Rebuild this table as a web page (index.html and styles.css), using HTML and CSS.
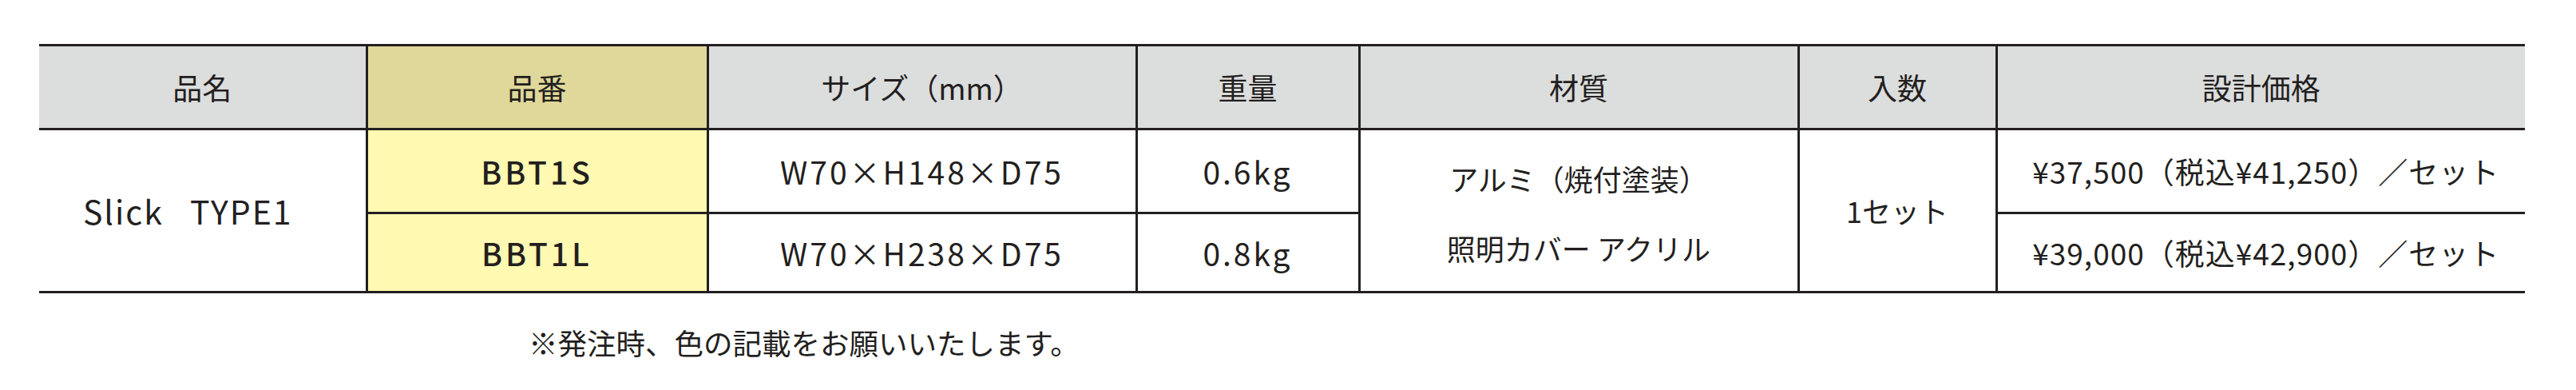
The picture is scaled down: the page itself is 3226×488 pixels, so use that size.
FILE: index.html
```html
<!DOCTYPE html>
<html lang="ja">
<head>
<meta charset="utf-8">
<title>Slick TYPE1 仕様</title>
<link rel="stylesheet" href="styles.css">
</head>
<body>
<div class="page">
  <table class="spec">
    <colgroup>
      <col class="c-name">
      <col class="c-code">
      <col class="c-size">
      <col class="c-weight">
      <col class="c-mat">
      <col class="c-qty">
      <col class="c-price">
    </colgroup>
    <thead>
      <tr>
        <th>品名</th>
        <th class="code-head">品番</th>
        <th>サイズ（mm）</th>
        <th>重量</th>
        <th>材質</th>
        <th>入数</th>
        <th>設計価格</th>
      </tr>
    </thead>
    <tbody>
      <tr class="r1">
        <td rowspan="2" class="name">Slick TYPE1</td>
        <td class="code">BBT1S</td>
        <td class="num">W70×H148×D75</td>
        <td class="num">0.6kg</td>
        <td rowspan="2" class="mat"><span class="line">アルミ（焼付塗装）</span><span class="line">照明カバー アクリル</span></td>
        <td rowspan="2">1セット</td>
        <td class="num price">¥37,500（税込¥41,250）／セット</td>
      </tr>
      <tr class="r2">
        <td class="code">BBT1L</td>
        <td class="num">W70×H238×D75</td>
        <td class="num">0.8kg</td>
        <td class="num price">¥39,000（税込¥42,900）／セット</td>
      </tr>
    </tbody>
  </table>
  <p class="note">※発注時、色の記載をお願いいたします。</p>
</div>
</body>
</html>
```

FILE: styles.css
```css
html, body {
  margin: 0;
  padding: 0;
  background: #ffffff;
}

body {
  font-family: "Noto Sans CJK JP", "Noto Sans", sans-serif;
  color: #231f20;
}

.page {
  padding: 55px 0 0 49px;
}

.spec {
  border-collapse: collapse;
  table-layout: fixed;
  width: 3113px;
}

.c-name { width: 410px; }
.c-code { width: 427px; }
.c-size { width: 537px; }
.c-weight { width: 279px; }
.c-mat { width: 550px; }
.c-qty { width: 248px; }
.c-price { width: 662px; }

.spec th,
.spec td {
  border: 3px solid #231f20;
  padding: 0;
  text-align: center;
  vertical-align: middle;
  font-size: 36px;
  font-weight: 400;
  line-height: 1.2;
  white-space: nowrap;
}

.spec th:first-child,
.spec td:first-child {
  border-left: none;
}

.spec th:last-child,
.spec td:last-child {
  border-right: none;
}

.spec thead tr {
  height: 105px;
}

.spec thead th {
  background: #dcdddd;
  font-size: 37px;
}

.spec thead th.code-head {
  background: #e0d89a;
}

.spec tr.r1 {
  height: 105px;
}

.spec tr.r2 {
  height: 99px;
}

.spec td.name {
  font-size: 41px;
  letter-spacing: 2px;
  word-spacing: 22px;
  padding-right: 36px;
}

.spec td.code {
  background: #fff9b1;
  font-size: 39px;
  font-weight: 500;
  letter-spacing: 4px;
}

.spec td.num {
  font-size: 39px;
  letter-spacing: 3px;
}

.spec td.price {
  font-size: 37px;
  letter-spacing: 1px;
  padding-left: 12px;
}

.spec td.mat .line {
  display: block;
  line-height: 81px;
  margin-top: 6px;
}

.note {
  margin: 40px 0 0 613px;
  font-size: 36.5px;
  line-height: 1.2;
}
```
